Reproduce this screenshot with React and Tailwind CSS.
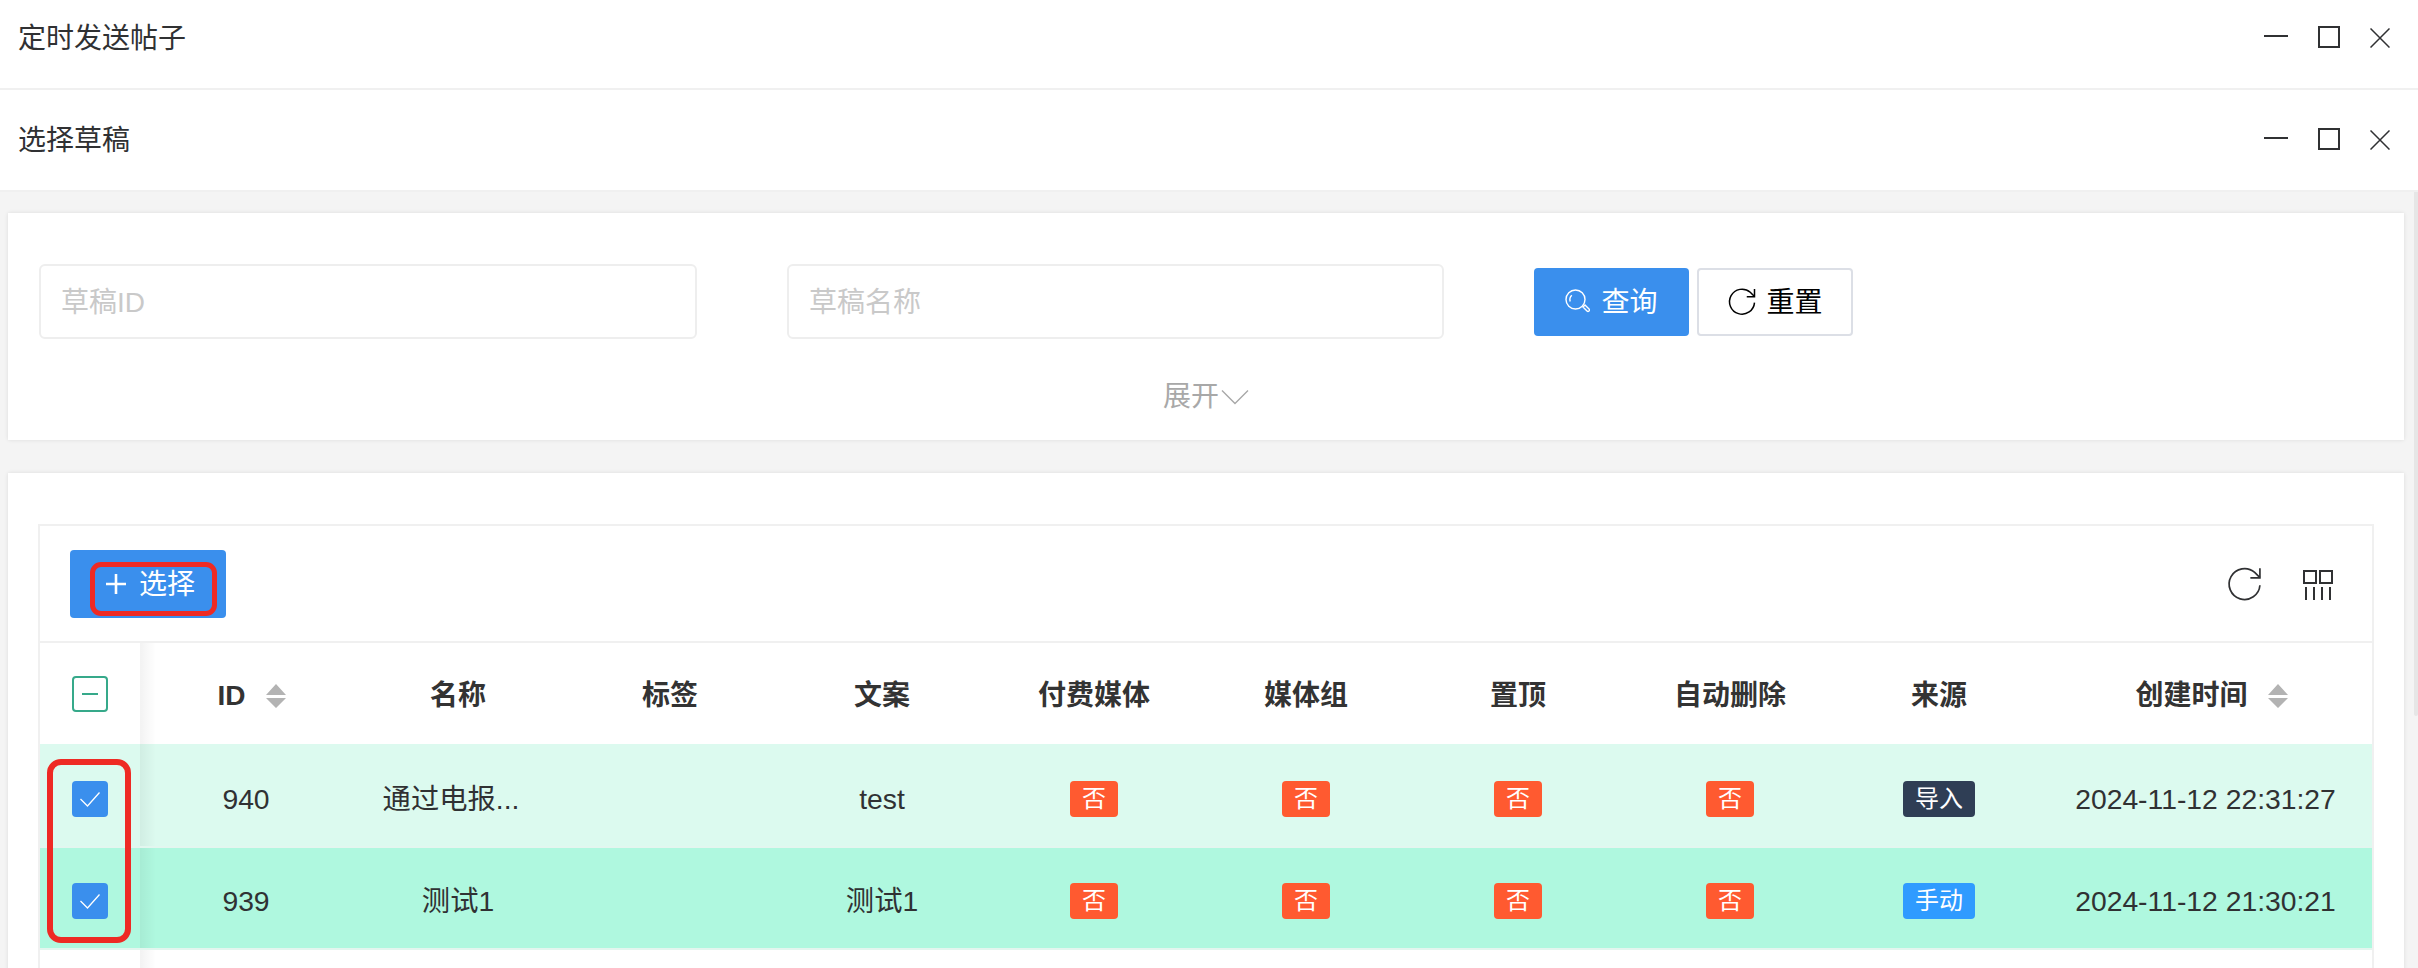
const font = { fontFamily: '"Liberation Sans", "Noto Sans CJK SC", sans-serif' };

function WindowBar({ title, className }) {
  return (
    <div className={`flex items-center justify-between bg-white pl-[18px] pr-[28px] ${className}`}>
      <span className="translate-y-[2px] text-[28px] leading-none text-[#303133]">{title}</span>
      <div className="flex items-center">
        <svg width="24" height="24" viewBox="0 0 24 24" className="mr-[30px] -translate-y-[1px]">
          <path d="M0 12H24" stroke="#303133" strokeWidth="2" />
        </svg>
        <svg width="22" height="22" viewBox="0 0 22 22" className="mr-[30px]">
          <rect x="1" y="1" width="20" height="20" fill="none" stroke="#303133" strokeWidth="2" />
        </svg>
        <svg width="20" height="20" viewBox="0 0 20 20" className="translate-y-[1px]">
          <path d="M0.5 0.5L19.5 19.5M19.5 0.5L0.5 19.5" stroke="#303133" strokeWidth="1.5" />
        </svg>
      </div>
    </div>
  );
}

function RefreshIcon({ size, color, sw }) {
  return (
    <svg width={size} height={size} viewBox="0 0 24 24" fill="none" stroke={color} strokeWidth={sw}>
      <path d="M22 12.5a10 10 0 1 1-3.4-8.3L22 7.6" />
      <path d="M22 1.5v6.2h-6.2" />
    </svg>
  );
}

function Sort() {
  return (
    <svg width="20" height="24" viewBox="0 0 20 24" className="shrink-0">
      <path d="M10 0L20 11H0Z M0 14H20L10 24Z" fill="#b3b3b3" />
    </svg>
  );
}

function Tag({ children, color }) {
  return (
    <span className={`inline-flex h-[36px] items-center justify-center rounded-[4px] px-[12px] text-[24px] leading-none text-white ${color}`}>
      {children}
    </span>
  );
}

function Check({ checked }) {
  if (checked) {
    return (
      <span className="flex h-[36px] w-[36px] items-center justify-center rounded-[4px] bg-[#3a8fed]">
        <svg width="20" height="15" viewBox="0 0 20 15" fill="none" stroke="#fff" strokeWidth="1.3">
          <path d="M0.5 7L7.5 14L19.5 0.5" />
        </svg>
      </span>
    );
  }
  return (
    <span className="flex h-[36px] w-[36px] items-center justify-center rounded-[4px] border-2 border-[#36a98a] bg-white">
      <span className="h-[2px] w-[16px] bg-[#36a98a]" />
    </span>
  );
}

const cols = 'grid grid-cols-[100px_repeat(8,212px)_206px_329px]';
const fixed = 'relative z-10 flex items-center justify-center';

function Fade() {
  return <span className="absolute left-full top-0 h-full w-[16px] bg-gradient-to-r from-black/5 to-transparent" />;
}

const rows = [
  { id: '940', name: '通过电报...', text: 'test', source: '导入', sourceColor: 'bg-[#2f3e55]', time: '2024-11-12 22:31:27', bg: 'bg-[#dcfaef]', h: 'h-[104px]', cell: 'pt-[8px]' },
  { id: '939', name: '测试1', text: '测试1', source: '手动', sourceColor: 'bg-[#2f9bff]', time: '2024-11-12 21:30:21', bg: 'bg-[#aff8df]', h: 'h-[102px]', cell: 'pt-[6px]' },
];

function Row({ r }) {
  return (
    <div className={`${cols} ${r.h} border-b-2 border-[#e3f6ef] ${r.bg} text-[28.3px] leading-none text-[#303133]`}>
      <div className={`${fixed} ${r.bg} ${r.cell}`}><Check checked /><Fade /></div>
      <div className={`flex items-center justify-center ${r.cell}`}>{r.id}</div>
      <div className={`flex items-center justify-center ${r.cell} ${r.id === '940' ? 'pr-[14px]' : ''}`}>{r.name}</div>
      <div />
      <div className={`flex items-center justify-center ${r.cell}`}>{r.text}</div>
      {[0, 1, 2, 3].map((i) => (
        <div key={i} className={`flex items-center justify-center ${r.cell}`}><Tag color="bg-[#ff5a30]">否</Tag></div>
      ))}
      <div className={`flex items-center justify-center ${r.cell}`}><Tag color={r.sourceColor}>{r.source}</Tag></div>
      <div className={`flex items-center justify-center whitespace-nowrap pr-[2px] ${r.cell}`}>{r.time}</div>
    </div>
  );
}

export default function App() {
  const heads = ['名称', '标签', '文案', '付费媒体', '媒体组', '置顶', '自动删除', '来源'];
  return (
    <div style={font} className="flex h-[968px] w-[2418px] flex-col overflow-hidden bg-white">
      <WindowBar title="定时发送帖子" className="h-[90px] border-b-2 border-[#f0f0f0] pb-[14px]" />
      <WindowBar title="选择草稿" className="h-[100px] pb-[2px]" />

      <div className="relative min-h-0 flex-1 border-t-2 border-[#f0f0f0] bg-[#f4f4f4] pl-[8px] pr-[14px] pt-[21px]">
        <div className="absolute right-0 top-0 h-[524px] w-[4px] rounded-b-[3px] bg-[#e6e6e6]" />

        <section className="h-[227px] bg-white pt-[51px] shadow-[0_0_4px_rgba(0,0,0,0.1)]">
          <div className="flex items-center pl-[31px]">
            <div className="flex h-[75px] w-[658px] items-center rounded-[6px] border-2 border-[#eeeeee] pl-[20px] pt-[2px] text-[28px] text-[#c9c9c9]">草稿ID</div>
            <div className="ml-[90px] flex h-[75px] w-[657px] items-center rounded-[6px] border-2 border-[#eeeeee] pl-[20px] pt-[2px] text-[28px] text-[#c9c9c9]">草稿名称</div>
            <button className="ml-[90px] flex h-[68px] w-[155px] items-center justify-center gap-[11px] rounded-[4px] bg-[#3a8fed] text-[28px] text-white">
              <svg width="25" height="25" viewBox="0 0 25 25" fill="none" stroke="#fff" strokeWidth="1.4">
                <circle cx="10.5" cy="10.5" r="9.5" />
                <path d="M5.2 12.5a6 6 0 0 1 1.6-6.2" />
                <path d="M18 18l2-2 4 4a1.4 1.4 0 0 1-2 2z" />
              </svg>
              <span className="translate-y-[1px]">查询</span>
            </button>
            <button className="ml-[8px] flex h-[68px] w-[156px] items-center justify-center gap-[9px] rounded-[4px] border-2 border-[#dcdfe6] bg-white text-[28px] text-black">
              <RefreshIcon size={30} color="#000" sw="1.2" />
              <span className="translate-y-[1px]">重置</span>
            </button>
          </div>
          <div className="mt-[44px] flex items-center justify-center text-[28px] leading-none text-[#a8a8a8]">
            展开
            <svg width="28" height="16" viewBox="0 0 28 16" fill="none" stroke="#a8a8a8" strokeWidth="1.4" className="ml-[2px]">
              <path d="M1 1.5L14 14.5L27 1.5" />
            </svg>
          </div>
        </section>

        <section className="mt-[33px] h-[600px] bg-white px-[30px] pt-[51px] shadow-[0_0_4px_rgba(0,0,0,0.1)]">
          <div className="relative border-2 border-[#f0f0f0]">
            <div className="flex h-[117px] items-center justify-between border-b-2 border-[#f0f0f0] pl-[30px] pr-[39px]">
              <button className="relative flex h-[68px] w-[156px] items-center rounded-[4px] bg-[#3a8fed] pl-[36px] text-[28px] leading-none text-white">
                <svg width="20" height="20" viewBox="0 0 20 20" className="mr-[13px]">
                  <path d="M10 0V20M0 10H20" stroke="#fff" strokeWidth="2.6" />
                </svg>
                <span className="translate-y-[1px]">选择</span>
                <span className="absolute left-[20px] top-[12px] h-[54px] w-[127px] rounded-[11px] border-[5px] border-[#ee2a24]" />
              </button>
              <div className="flex translate-y-[1px] items-center gap-[40px] text-[#303133]">
                <RefreshIcon size={37} color="#303133" sw="1.1" />
                <svg width="30" height="30" viewBox="0 0 30 30" fill="none" stroke="#303133" strokeWidth="2">
                  <rect x="1" y="1" width="12" height="12" />
                  <rect x="17" y="1" width="12" height="12" />
                  <path d="M3 17V30M11 17V30M19 17V30M27 17V30" />
                </svg>
              </div>
            </div>

            <div className={`${cols} h-[101px] text-[28px] font-semibold leading-none text-[#333333]`}>
              <div className={`${fixed} bg-white`}><Check /><Fade /></div>
              <div className="flex items-center justify-center gap-[20px] pl-[11px] pt-[4px]">ID<Sort /></div>
              {heads.map((h) => (
                <div key={h} className="flex items-center justify-center pt-[4px]">{h}</div>
              ))}
              <div className="flex items-center justify-center gap-[20px] pl-[10px] pt-[4px]">创建时间<Sort /></div>
            </div>

            {rows.map((r) => <Row key={r.id} r={r} />)}

            <div className={`${cols} h-[40px]`}>
              <div className={`${fixed} bg-white`}><Fade /></div>
            </div>

            <span className="absolute left-[7px] top-[233px] z-20 h-[184px] w-[84px] rounded-[14px] border-[6px] border-[#ee2a24]" />
          </div>
        </section>
      </div>
    </div>
  );
}
